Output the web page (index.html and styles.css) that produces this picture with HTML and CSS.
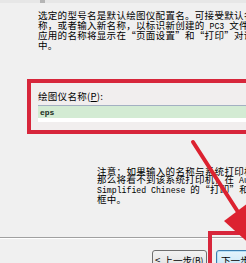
FILE: index.html
```html
<!DOCTYPE html>
<html lang="zh">
<head>
<meta charset="utf-8">
<link rel="stylesheet" href="styles.css">
</head>
<body>
<div class="page">
  <div class="top"><div class="mark"></div></div>
  <p class="intro">选定的型号名是默认绘图仪配置名。可接受默认名<br>称，或者输入新名称，以标识新创建的<span class="lat"> PC3 </span>文件。<br>应用的名称将显示在“页面设置”和“打印”对话框<br>中。</p>
  <div class="redbox">
    <div class="label">绘图仪名称(<u>P</u>):</div>
    <div class="input"><span class="val">eps</span></div>
  </div>
  <p class="note">注意：如果输入的名称与系统打印机名称相同，<br>那么将看不到该系统打印机，在<span class="lat"> AutoCAD </span>的<br><span class="lat">Simplified Chinese </span>的“打印”和“页面设置”对话<br>框中。</p>
  <div class="sep"></div>
  <div class="buttons">
    <button class="btn prev"><span class="lt">&lt;</span>上一步<span class="key">(<u>B</u>)</span></button>
    <button class="btn next">下一步<span class="key">(<u>N</u>)</span> &gt;</button>
  </div>
  <div class="hilite"></div>
  <svg class="arrow" width="246" height="263" viewBox="0 0 246 263">
    <line x1="193" y1="142" x2="238" y2="212" stroke="#dc2230" stroke-width="4" stroke-linecap="round"/>
    <polygon points="254,248 224,221 248,203" fill="#dc2230"/>
  </svg>
</div>
</body>
</html>
```
FILE: styles.css
```css
html, body {
  margin: 0;
  padding: 0;
}
body {
  background: #f0f0f0;
  font-family: "Noto Sans CJK SC", "Noto Sans", sans-serif;
  color: #000;
}
.page {
  position: relative;
  width: 246px;
  height: 263px;
  overflow: hidden;
  white-space: nowrap;
}
.top {
  height: 3px;
  background: #e7e7e7;
}
.mark {
  margin-left: 40px;
  width: 5px;
  height: 3px;
  background: #b5b5b5;
}
.intro {
  margin: 8px 0 0 0;
  padding-left: 38px;
  font-size: 9.5px;
  letter-spacing: 0.3px;
  line-height: 9.5px;
}
.lat {
  font-family: "Liberation Mono", monospace;
  font-size: 8.2px;
  letter-spacing: 0;
}
.redbox {
  margin: 29px 0 0 27px;
  border: 4px solid #d7263b;
  border-right: none;
  height: 47px;
  background: #f1eeee;
  padding-left: 7px;
  box-sizing: content-box;
}
.label {
  padding-top: 8px;
  font-size: 9.5px;
  letter-spacing: 0.3px;
  line-height: 11px;
}
.input {
  margin-top: 3px;
  height: 15px;
  border-top: 1px solid #a3b0c2;
  border-bottom: 1px solid #ffffff;
  background: linear-gradient(#d3ebd3 0, #d3ebd3 12px, #ffffff 12px);
  display: flex;
  align-items: center;
  padding-left: 2px;
}
.val {
  font-family: "Liberation Mono", monospace;
  font-weight: bold;
  font-size: 8px;
  margin-top: -3px;
  color: #1a2a1a;
}
.note {
  margin: 33px 0 0 0;
  padding-left: 97px;
  font-size: 9.5px;
  letter-spacing: 0.3px;
  line-height: 8px;
}
.sep {
  margin-top: 34px;
  border-top: 1px solid #a0a0a0;
  border-bottom: 1px solid #ffffff;
}
.buttons {
  display: flex;
  gap: 9px;
  margin-top: 11px;
  padding-left: 152px;
}
.btn {
  flex: none;
  display: flex;
  align-items: center;
  height: 20px;
  padding: 0 0 0 2px;
  font-family: "Noto Sans CJK SC", sans-serif;
  font-size: 9.6px;
  letter-spacing: 0;
  color: #000;
  border-radius: 3px;
  overflow: hidden;
}
.lt {
  margin-right: 3px;
}
.key {
  font-size: 8.5px;
}
.prev {
  width: 55px;
  border: 1px solid #707070;
  background: linear-gradient(#f2f2f2, #e0e0e0);
}
.next {
  width: 60px;
  padding-left: 4px;
  border: 1px solid #3c7fb1;
  background: linear-gradient(#e5f4fc, #c4e5f6);
  box-shadow: inset 0 0 0 1px #b6dff6;
}
.hilite {
  position: absolute;
  left: 208px;
  top: 231px;
  width: 60px;
  height: 60px;
  border: 4px solid #d7263b;
}
.arrow {
  position: absolute;
  left: 0;
  top: 0;
}
```
